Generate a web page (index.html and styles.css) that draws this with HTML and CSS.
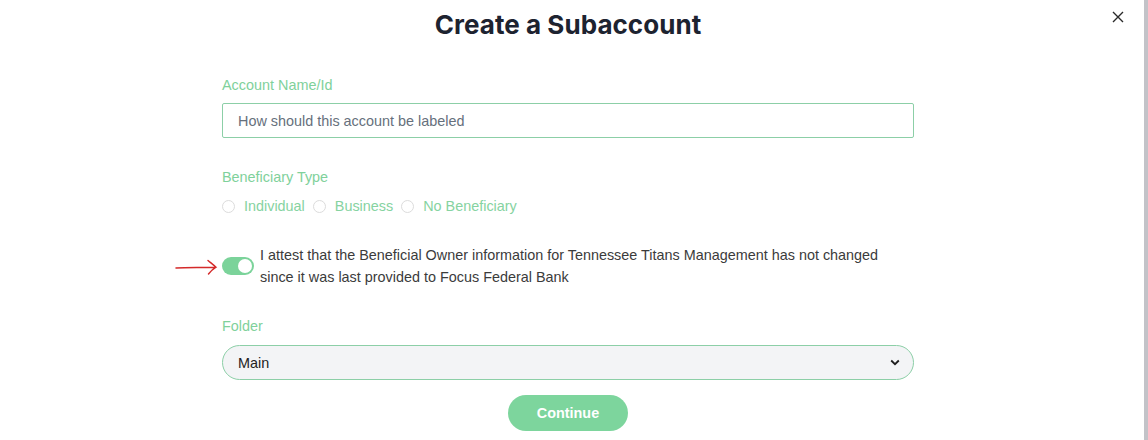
FILE: index.html
```html
<!DOCTYPE html>
<html>
<head>
<meta charset="utf-8">
<link rel="stylesheet" href="styles.css">
</head>
<body>
<div class="page">
  <div class="modal">
    <button class="close" aria-label="Close">
      <svg width="12" height="12" viewBox="0 0 12 12"><path d="M1 1 L11 11 M11 1 L1 11" stroke="#2a2a2a" stroke-width="1.4" fill="none"/></svg>
    </button>
    <h1 class="title">Create a Subaccount</h1>
    <form class="form">
      <label class="label">Account Name/Id</label>
      <div class="input"><span class="placeholder">How should this account be labeled</span></div>

      <label class="label label-ben">Beneficiary Type</label>
      <div class="radios">
        <span class="radio"><span class="circle"></span>Individual</span>
        <span class="radio"><span class="circle"></span>Business</span>
        <span class="radio"><span class="circle"></span>No Beneficiary</span>
      </div>

      <div class="attest">
        <svg class="arrow" width="46" height="20" viewBox="0 0 46 20"><path d="M1 11 C12 10.5 26 10.6 40 10.2 M33 3.5 C36 6 38.5 8 41 10.2 C38 12 35.5 14.5 33.5 17" stroke="#d42a2a" stroke-width="1.5" fill="none" stroke-linecap="round"/></svg>
        <span class="toggle"><span class="knob"></span></span>
        <p class="attest-text">I attest that the Beneficial Owner information for Tennessee Titans Management has not changed since it was last provided to Focus Federal Bank</p>
      </div>

      <label class="label label-folder">Folder</label>
      <div class="select">
        <span>Main</span>
        <svg width="10" height="7" viewBox="0 0 10 7"><path d="M1.2 1.5 L5 5.2 L8.8 1.5" stroke="#1e1e1e" stroke-width="1.8" fill="none"/></svg>
      </div>

      <div class="actions"><button type="button" class="continue">Continue</button></div>
    </form>
  </div>
  <div class="scrollbar"></div>
</div>
</body>
</html>
```
FILE: styles.css
```css
html, body {
  margin: 0;
  padding: 0;
  background: #ffffff;
}
body {
  font-family: "Liberation Sans", Arial, sans-serif;
  width: 1148px;
  height: 440px;
  overflow: hidden;
}
.page {
  display: flex;
  height: 440px;
}
.modal {
  position: relative;
  width: 1136px;
  display: flex;
  flex-direction: column;
  align-items: center;
}
.scrollbar {
  margin-left: 8px;
  width: 4px;
  height: 440px;
  background: #c3c3c8;
}
.close {
  position: absolute;
  top: 11px;
  right: 12px;
  border: 0;
  background: none;
  padding: 0;
  width: 12px;
  height: 12px;
  display: flex;
}
.title {
  margin: 8px 0 0;
  font-family: Inter, "Liberation Sans", sans-serif;
  font-size: 26px;
  line-height: 34px;
  font-weight: 700;
  color: #1d2330;
  letter-spacing: 0.05px;
}
.form {
  width: 692px;
  display: flex;
  flex-direction: column;
  margin-top: 33px;
}
.label {
  display: block;
  font-size: 14.4px;
  line-height: 20px;
  color: #7fd19b;
}
.input {
  margin-top: 8px;
  height: 35px;
  box-sizing: border-box;
  border: 1px solid #8ccfa7;
  border-radius: 2px;
  display: flex;
  align-items: center;
  padding-left: 15px;
}
.placeholder {
  font-size: 14.4px;
  color: #66707c;
}
.label-ben {
  margin-top: 29px;
}
.radios {
  margin-top: 9px;
  display: flex;
  align-items: center;
  gap: 8px;
  height: 20px;
}
.radio {
  display: flex;
  align-items: center;
  gap: 9px;
  font-size: 14.4px;
  color: #86d3a1;
}
.circle {
  width: 13px;
  height: 13px;
  box-sizing: border-box;
  border: 1px solid #dcdcdc;
  border-radius: 50%;
  background: #fff;
}
.attest {
  position: relative;
  margin-top: 28px;
  display: flex;
  align-items: center;
  gap: 6px;
}
.arrow {
  position: absolute;
  left: -47px;
  top: 13px;
}
.toggle {
  flex: none;
  width: 32px;
  height: 18px;
  border-radius: 9px;
  background: #7bd39a;
  display: flex;
  align-items: center;
  justify-content: flex-end;
  padding: 0 2px;
  box-sizing: border-box;
}
.knob {
  width: 14px;
  height: 14px;
  border-radius: 50%;
  background: #ffffff;
}
.attest-text {
  margin: 0;
  width: 630px;
  font-size: 14.4px;
  line-height: 22px;
  color: #3b3b3b;
}
.label-folder {
  margin-top: 28px;
}
.select {
  margin-top: 9px;
  height: 35px;
  box-sizing: border-box;
  border: 1px solid #8ccfa7;
  border-radius: 18px;
  background: #f3f4f6;
  display: flex;
  align-items: center;
  justify-content: space-between;
  padding: 0 13px 0 15px;
  font-size: 14.4px;
  color: #222;
}
.actions {
  display: flex;
  justify-content: center;
  margin-top: 15px;
}
.continue {
  width: 120px;
  height: 36px;
  border: 0;
  border-radius: 18px;
  background: #7dd59d;
  color: #ffffff;
  font-family: "Liberation Sans", Arial, sans-serif;
  font-weight: 700;
  font-size: 14.4px;
}
```
